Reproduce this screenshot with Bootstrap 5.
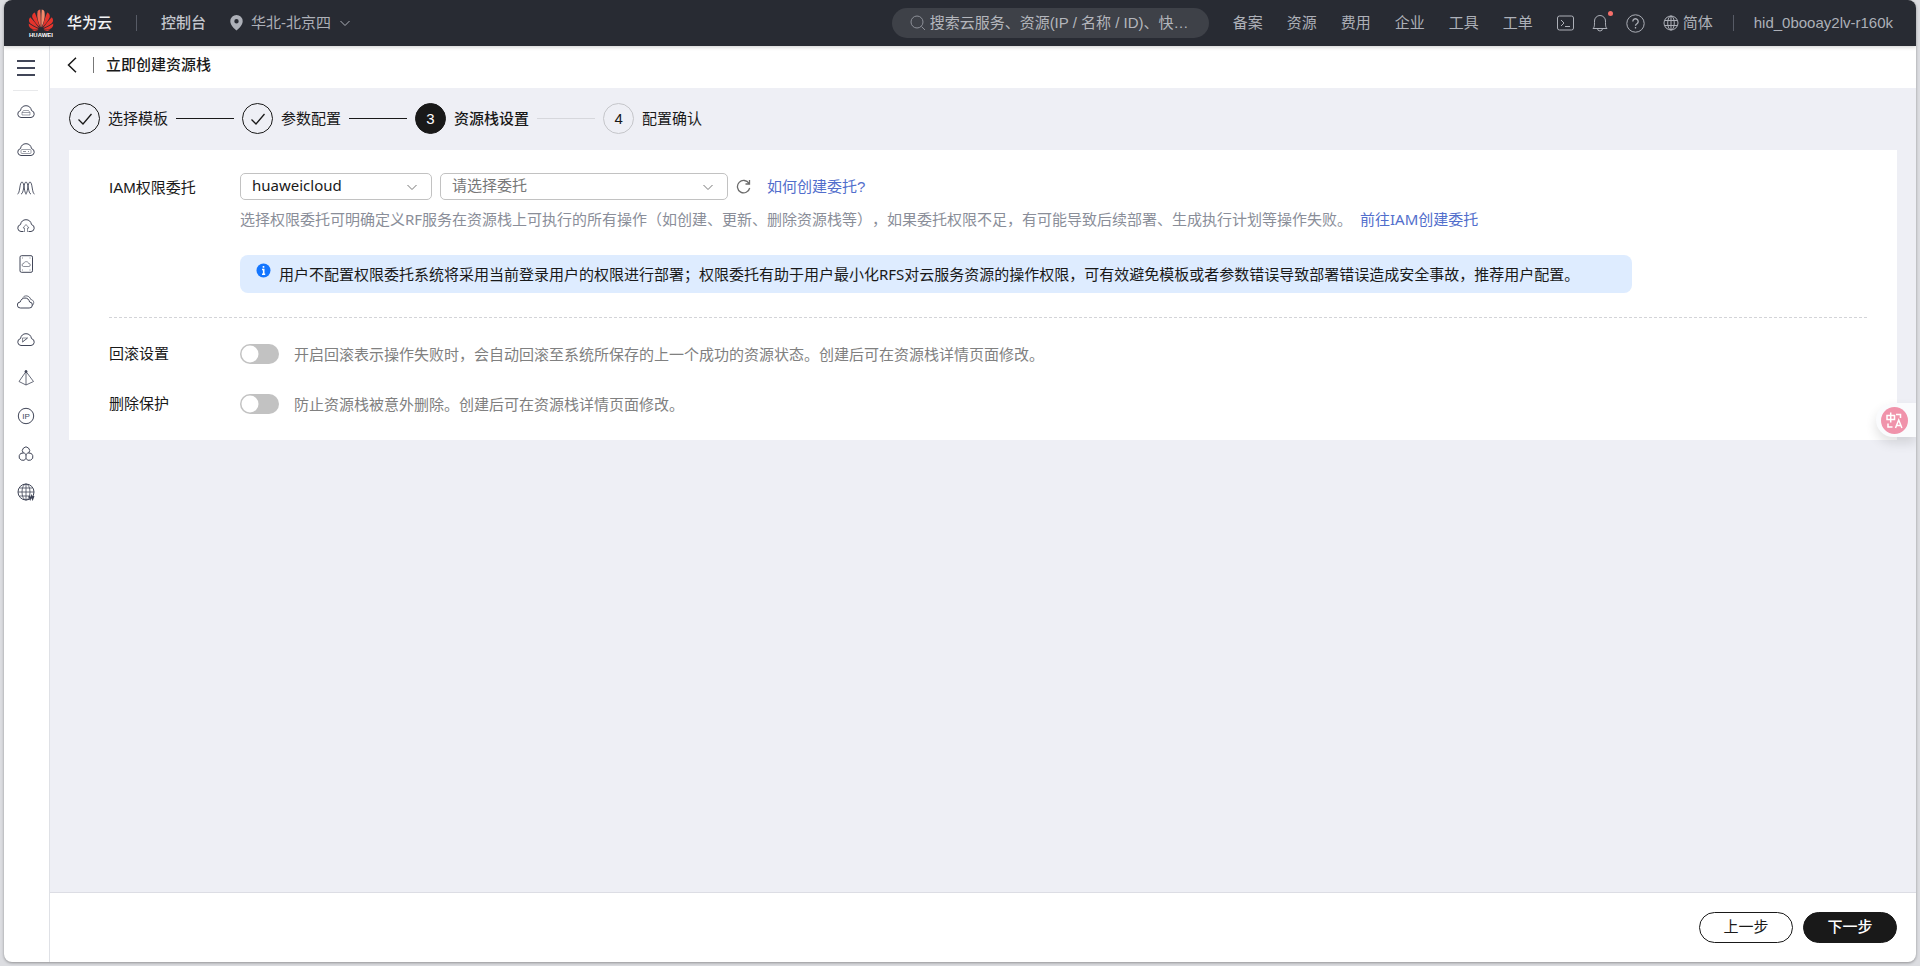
<!DOCTYPE html>
<html lang="zh-CN">
<head>
<meta charset="utf-8">
<meta name="viewport" content="width=device-width, initial-scale=1">
<title>立即创建资源栈</title>
<link href="https://cdn.jsdelivr.net/npm/bootstrap@5.3.0/dist/css/bootstrap.min.css" rel="stylesheet">
<style>
  body { font: 15px/22px "Liberation Sans", "Noto Sans CJK SC", sans-serif; color: #191919; background: #dcdde1; text-spacing-trim: space-all; }
  .app-window { min-height: 100vh; padding: 0 4px 4px; }
  .app-frame { background: #fff; border-radius: 8px; overflow: hidden; box-shadow: 0 1px 3px rgba(0,0,0,.35); }
  .topbar { height: 46px; background: #282b33; color: #adb0b8; padding: 0 23px; position: relative; z-index: 1; box-shadow: 0 1px 4px rgba(0,0,0,.2); }
  .topbar a { color: inherit; text-decoration: none; white-space: nowrap; }
  .topbar .brand-text { color: #f2f3f5; font-weight: 500; margin-left: 12px; }
  .topbar .console-link { color: #c3c6cd; font-weight: 500; }
  .v-line { width: 1px; height: 16px; background: #575b66; }
  .user-line { margin: 0 20px; }
  .search-pill { width: 317px; height: 30px; border-radius: 15px; background: #3e4148; padding: 0 14px 0 18px; color: #8d9098; }
  .search-pill input { background: none; border: 0; outline: 0; color: #b9bbc2; padding: 0; text-overflow: ellipsis; min-width: 0; }
  .search-pill input::placeholder { color: #b4b6bc; opacity: 1; }
  .menu-links { gap: 24px; }
  .tool-links { gap: 18px; }
  .plain-btn { border: 0; background: none; padding: 0; color: inherit; display: flex; position: relative; }
  .alert-dot { position: absolute; top: -3px; right: -5px; width: 5px; height: 5px; border-radius: 50%; background: #f66f6a; }
  svg { display: block; flex: none; fill: none; stroke: currentColor; }
  .filled-icon { stroke: none; }
  .white-icon { stroke: #fff; }
  .grey-icon { stroke: #6b6b6b; }
  .side-rail { width: 46px; border-right: 1px solid #dfe1e6; color: #414658; padding: 14px 2px 0 0; }
  .side-rail hr { width: 25px; margin: 14px 0 2px; color: #a5a8ae; }
  .side-rail a { color: inherit; height: 38px; display: flex; align-items: center; }
  .page-title { height: 42px; padding-left: 17px; }
  .page-title h1 { font-size: 15px; line-height: 22px; font-weight: 500; margin: 0; color: #191919; }
  .page-title .v-line { background: #777; }
  .work-area { background: #eeeff5; padding: 15px 19px; }
  .steps { margin-bottom: 16px; }
  .step-dot { width: 31px; height: 31px; border: 1px solid #191919; border-radius: 50%; }
  .step-dot.now { background: #191919; color: #fff; }
  .step-dot.later { border-color: #c5c6ca; }
  .step-now-text { font-weight: 500; }
  .step-line { width: 58px; height: 1px; background: #191919; }
  .step-line.later { background: #d6d7dc; }
  .panel-box { background: #fff; padding: 23px 30px 25px 40px; }
  .field-label { width: 131px; flex: none; }
  .form-select { font: 15px/21px "Noto Sans", "Noto Sans CJK SC", sans-serif; height: 27px; border: 1px solid #c2c2c2; border-radius: 5px; padding: 0 32px 2px 11px; color: #191919;
    background-image: url("data:image/svg+xml,%3Csvg xmlns='http://www.w3.org/2000/svg' viewBox='0 0 12 12' fill='none' stroke='%23777'%3E%3Cpath d='M1.5 4L6 8.5 10.5 4'/%3E%3C/svg%3E"); background-size: 12px; background-position: right 13px center; }
  .form-select.domain { width: 192px; }
  .form-select.agency { width: 288px; color: #777; }
  .text-link { color: #526ecc; text-decoration: none; }
  .hint { color: #8a8e99; font-family: "Noto Sans", "Noto Sans CJK SC", sans-serif; }
  .hint.soft { color: #808080; }
  .note { background: #deecff; border-radius: 8px; max-width: 1392px; padding: 8px 16px; margin-top: 25px; font-family: "Noto Sans", "Noto Sans CJK SC", sans-serif; }
  .dash { border: 0; border-top: 1px dashed #c9cacf; margin: 24px 0 25px; opacity: .8; }
  .form-switch { padding: 0; margin: 0; min-height: 0; width: 54px; flex: none; }
  .form-switch .form-check-input { float: none; display: block; margin: 0; width: 39px; height: 20px; border: 0; background-color: #c2c2c2;
    background-image: url("data:image/svg+xml,%3Csvg xmlns='http://www.w3.org/2000/svg' viewBox='0 0 20 20'%3E%3Ccircle cx='10' cy='10' r='8.5' fill='%23fff'/%3E%3C/svg%3E"); }
  .switch-row + .switch-row { margin-top: 28px; }
  .action-bar { padding: 19px; gap: 10px; border-top: 1px solid #dcdde4; }
  .btn-pill { width: 94px; height: 31px; border-radius: 16px; border: 1px solid #191919; padding: 0 0 2px; font-size: 15px; line-height: 22px; color: #191919; background: #fff; }
  .btn-pill.solid { background: #191919; color: #fff; font-weight: 500; }
  .translate-tab { position: fixed; right: 4px; top: 403px; width: 40px; height: 34px; border: 0; border-radius: 17px 0 0 17px; background: #fafbfd; padding: 0 0 0 5px; box-shadow: 0 6px 12px rgba(0,0,0,.12); clip-path: inset(-20px 0 -24px -20px); }
</style>
</head>
<body>
<div class="app-window d-flex">
<div class="app-frame d-flex flex-column flex-fill">
  <header class="topbar d-flex align-items-center">
    <a href="#" class="d-flex align-items-center">
      <svg class="filled-icon" width="28" height="28" viewBox="0 0 28 28">
        <g fill="#e5342c">
          <path d="M13.6 18.6C11 12.5 9.6 8 10.6 2.6 10.9 1.1 12.6.3 13.3.4 13.7 6 13.9 12 13.6 18.6z" fill="#f0644e"/>
          <path d="M14.5 18.6C17 12.5 18.5 8 17.4 2.6 17.1 1.1 15.4.3 14.7.4 14.3 6 14.2 12 14.5 18.6z" fill="#f58a6c"/>
          <path d="M12.8 18.6C11.3 12.8 9.3 7 7.8 3.4 4.8 4.8 4.6 7.6 6 9.8 7.9 13.2 10.2 16 12.8 18.6z"/>
          <path d="M15.2 18.6C16.7 12.8 18.7 7 20.2 3.4 23.2 4.8 23.4 7.6 22 9.8 20.1 13.2 17.8 16 15.2 18.6z"/>
          <path d="M12 19C8.900 14.800 6 11 3.200 8.200 1 11 2 13.700 4.200 15.100 6.700 16.800 9 18.100 12 19z"/>
          <path d="M16 19C19.100 14.800 22 11 24.800 8.200 27 11 26 13.700 23.800 15.100 21.300 16.800 19 18.100 16 19z"/>
          <path d="M11.500 20C7.500 18 4.500 16.200 1.700 14.500 1.500 17.700 3.300 19.700 5.600 20 7.700 20.300 9.500 20.200 11.500 20zM16.500 20C20.500 18 23.500 16.200 26.300 14.500 26.500 17.700 24.700 19.700 22.400 20 20.300 20.300 18.500 20.200 16.500 20z"/>
          <path d="M11.600 20.600H5C6.500 22.500 8.500 22.600 11.600 20.600zM16.400 20.600H23C21.500 22.500 19.500 22.600 16.400 20.600z"/>
        </g>
        <text x="14" y="28" text-anchor="middle" font-size="6" font-weight="700" fill="#fff" font-family="Liberation Sans, sans-serif">HUAWEI</text>
      </svg>
      <span class="brand-text">华为云</span>
    </a>
    <span class="v-line mx-4"></span>
    <a href="#" class="console-link">控制台</a>
    <a href="#" class="d-flex align-items-center ms-4">
      <svg class="filled-icon me-2" width="13" height="16" viewBox="0 0 13 16"><path fill="currentColor" fill-rule="evenodd" d="M6.500 0A6.200 6.200 0 0 1 12.700 6.200C12.700 9.500 9.500 13 6.500 15.500 3.500 13 .3 9.500.3 6.200A6.200 6.200 0 0 1 6.500 0zm0 4a2.200 2.200 0 1 0 0 4.400 2.200 2.200 0 0 0 0-4.400z"/></svg>
      华北-北京四
      <svg class="ms-2" width="12" height="12" viewBox="0 0 12 12"><path d="M1.500 4L6 8.500 10.500 4"/></svg>
    </a>
    <div class="search-pill d-flex align-items-center ms-auto">
      <svg width="16" height="16" viewBox="0 0 16 16"><circle cx="7" cy="7" r="6"/><path d="M11.500 11.500L15 15"/></svg>
      <input class="flex-fill ms-1" type="text" aria-label="搜索" placeholder="搜索云服务、资源(IP / 名称 / ID)、快速入口">
    </div>
    <nav class="menu-links d-flex ms-4">
      <a href="#">备案</a><a href="#">资源</a><a href="#">费用</a><a href="#">企业</a><a href="#">工具</a><a href="#">工单</a>
    </nav>
    <div class="tool-links d-flex align-items-center ms-4">
      <button class="plain-btn" aria-label="终端"><svg width="17" height="16" viewBox="0 0 17 16"><rect x=".5" y="1" width="16" height="14" rx="2"/><path d="M4 5l3 3-3 3M8 11.500h5"/></svg></button>
      <button class="plain-btn" aria-label="消息"><svg width="16" height="18" viewBox="0 0 16 18"><path d="M1 14.500C2.500 13 2.500 12 2.500 7a5.500 5.500 0 0 1 11 0c0 5 0 6 1.500 7.500zM5.500 14.500a2.500 2.500 0 0 0 5 0"/></svg><span class="alert-dot"></span></button>
      <button class="plain-btn" aria-label="帮助"><svg width="19" height="19" viewBox="0 0 19 19"><circle cx="9.500" cy="9.500" r="8.700"/><path d="M6.800 7.500a2.700 2.700 0 1 1 4.200 2.200c-1 .7-1.500 1-1.500 2.100M9.500 13v1.500" stroke-width="1.300"/></svg></button>
      <a href="#" class="d-flex align-items-center"><svg class="me-1" width="16" height="16" viewBox="0 0 16 16"><circle cx="8" cy="8" r="7"/><ellipse cx="8" cy="8" rx="3.300" ry="7"/><path d="M8 1v14M1.500 5.500h13M1.500 10.500h13"/></svg>简体</a>
    </div>
    <span class="v-line user-line"></span>
    <a href="#">hid_0booay2lv-r160k</a>
  </header>

  <div class="d-flex flex-fill">
    <nav class="side-rail d-flex flex-column align-items-center">
      <button class="plain-btn" aria-label="菜单"><svg width="18" height="16" viewBox="0 0 18 16" stroke-width="2"><path d="M0 1h18M0 8h18M0 15h18"/></svg></button>
      <hr>
      <a href="#" aria-label="弹性云服务器"><svg width="18" height="18" viewBox="0 0 18 18"><path d="M4 14.500a3.500 3.500 0 0 1-.5-6.900C4 4.500 6 2.700 9 2.700s5 1.800 5.500 4.900a3.500 3.500 0 0 1-.5 6.900z"/><path stroke-width=".5" d="M5 9.500h8M5 9.500l1.500-2h5l1.500 2V12H5z"/></svg></a>
      <a href="#" aria-label="裸金属服务器"><svg width="18" height="18" viewBox="0 0 18 18"><path d="M4 14.500a3.500 3.500 0 0 1-.5-6.900C4 4.500 6 2.700 9 2.700s5 1.800 5.500 4.900a3.500 3.500 0 0 1-.5 6.900z"/><rect stroke-width=".5" x="4" y="8.500" width="10" height="4" rx="1"/><path stroke-width=".6" d="M6 10.500h3M11.500 10v1"/></svg></a>
      <a href="#" aria-label="弹性伸缩"><svg width="18" height="18" viewBox="0 0 18 18" stroke-width=".9"><path d="M.5 15C3 15 2.500 3 5 3s2 12 4.500 12M4 15C7 15 6.500 3 9 3s2 12 5 12M8.500 15C11 15 10.500 3 13 3s2 12 4.500 12"/></svg></a>
      <a href="#" aria-label="云备份"><svg width="18" height="18" viewBox="0 0 18 18"><path d="M6.500 14.500H4a3.500 3.500 0 0 1-.5-6.900C4 4.500 6 2.700 9 2.700s5 1.800 5.500 4.900a3.500 3.500 0 0 1-.5 6.900h-2.500"/><path stroke-width=".6" d="M7.500 15V11H6l3-3.500 3 3.500h-1.500v4"/></svg></a>
      <a href="#" aria-label="云硬盘"><svg width="18" height="18" viewBox="0 0 18 18"><rect x="3" y=".7" width="12.500" height="16.600" rx="1.500"/><path stroke-width=".6" d="M6.500 11.500a1.500 1.500 0 0 1 .2-3c.5-2.500 4.500-2.500 5 0a1.500 1.500 0 0 1 .2 3zM5 3h1M12.500 3h1M5 15h1M12.500 15h1"/></svg></a>
      <a href="#" aria-label="虚拟私有云"><svg width="18" height="18" viewBox="0 0 18 18"><path d="M3.500 15a3 3 0 0 1-.3-6C4 6.500 5.500 5 8 5s4 1.500 4.600 4a3 3 0 0 1-.4 6z"/><path stroke-width=".8" d="M6 4.500C7.500 2 12.500 2.200 13.800 6.500c2.500.2 4.500 3.500 1.200 6.200"/></svg></a>
      <a href="#" aria-label="内容分发"><svg width="18" height="18" viewBox="0 0 18 18"><path d="M4 14.500a3.500 3.500 0 0 1-.5-6.900C4 4.500 6 2.700 9 2.700s5 1.800 5.500 4.900a3.500 3.500 0 0 1-.5 6.900z"/><path stroke-width=".6" d="M5.500 11V7h5zM5.500 11l5-4"/></svg></a>
      <a href="#" aria-label="云解析"><svg width="18" height="18" viewBox="0 0 18 18"><path stroke-width=".8" d="M9 2.500L2 12.500l7 3.500 7.500-3.500zM9 2.500V16"/><circle cx="9" cy="2.500" r="1" fill="currentColor"/></svg></a>
      <a href="#" aria-label="弹性公网IP"><svg width="18" height="18" viewBox="0 0 18 18"><circle cx="9" cy="9" r="7.700"/><text x="9" y="12" text-anchor="middle" font-size="8" stroke="none" fill="currentColor">IP</text></svg></a>
      <a href="#" aria-label="对象存储"><svg width="18" height="18" viewBox="0 0 18 18"><path d="M6.300 8a3.600 3.600 0 1 1 5.400 0M6.300 8a3.700 3.700 0 1 0 2.700 5.500A3.700 3.700 0 1 0 11.700 8M6.300 8C8 8 9 9 9 10.500 9 9 10 8 11.700 8M9 10.500v3"/></svg></a>
      <a href="#" aria-label="域名注册"><svg width="18" height="18" viewBox="0 0 18 18"><circle cx="9" cy="9" r="8"/><ellipse cx="9" cy="9" rx="4" ry="8" stroke-width=".8"/><path stroke-width=".8" d="M9 1v16M1 9h16M2.500 5h13M2.500 13h10"/><path stroke-width="1.500" d="M12 13l1.200 3 1.200-3 1.200 3 1.200-3"/></svg></a>
    </nav>

    <div class="d-flex flex-column flex-fill">
      <div class="page-title d-flex align-items-center">
        <a href="#" class="text-reset pb-2" aria-label="返回"><svg class="mt-1" width="10" height="16" viewBox="0 0 10 16" stroke-width="1.500"><path d="M9 .8L1.500 8 9 15.200"/></svg></a>
        <span class="v-line ms-3 me-2 mb-1"></span>
        <h1 class="ms-1 pb-1">立即创建资源栈</h1>
      </div>
      <main class="work-area flex-fill">
        <div class="steps d-flex align-items-center gap-2">
          <span class="step-dot d-flex align-items-center justify-content-center"><svg width="16" height="16" viewBox="0 0 16 16" stroke-width="1.300"><path d="M1.500 8.500L6 13l8.500-10"/></svg></span>
          <span>选择模板</span><span class="step-line"></span>
          <span class="step-dot d-flex align-items-center justify-content-center"><svg width="16" height="16" viewBox="0 0 16 16" stroke-width="1.300"><path d="M1.500 8.500L6 13l8.500-10"/></svg></span>
          <span>参数配置</span><span class="step-line"></span>
          <span class="step-dot now d-flex align-items-center justify-content-center">3</span>
          <span class="step-now-text">资源栈设置</span><span class="step-line later"></span>
          <span class="step-dot later d-flex align-items-center justify-content-center">4</span>
          <span>配置确认</span>
        </div>
        <form class="panel-box">
          <div class="d-flex">
            <label class="field-label pt-1" for="domain">IAM权限委托</label>
            <div class="flex-fill">
              <div class="d-flex align-items-center gap-2">
                <select class="form-select domain" id="domain"><option>huaweicloud</option></select>
                <select class="form-select agency" aria-label="委托"><option>请选择委托</option></select>
                <button type="button" class="plain-btn" aria-label="刷新"><svg class="grey-icon" width="15" height="15" viewBox="0 0 15 15" stroke-width="1.300"><path d="M13 4.500A6.200 6.200 0 1 0 13.700 9M13.500 1v4H9.500"/></svg></button>
                <a href="#" class="text-link ms-2">如何创建委托?</a>
              </div>
              <div class="hint mt-2">选择权限委托可明确定义RF服务在资源栈上可执行的所有操作（如创建、更新、删除资源栈等），如果委托权限不足，有可能导致后续部署、生成执行计划等操作失败。 <a href="#" class="text-link ms-1">前往IAM创建委托</a></div>
              <div class="note d-flex">
                <svg class="filled-icon me-2" width="15" height="15" viewBox="0 0 15 15"><circle cx="7.500" cy="7.500" r="7" fill="#1476ff"/><path stroke="#fff" stroke-width="1.600" d="M7.500 3v1.800M6 6.500h1.700v5M6 11.300h3.200"/></svg>
                <span>用户不配置权限委托系统将采用当前登录用户的权限进行部署；权限委托有助于用户最小化RFS对云服务资源的操作权限，可有效避免模板或者参数错误导致部署错误造成安全事故，推荐用户配置。</span>
              </div>
            </div>
          </div>
          <hr class="dash">
          <div class="switch-row d-flex align-items-center">
            <label class="field-label" for="rollback">回滚设置</label>
            <div class="form-check form-switch"><input class="form-check-input" type="checkbox" role="switch" id="rollback"></div>
            <span class="hint soft">开启回滚表示操作失败时，会自动回滚至系统所保存的上一个成功的资源状态。创建后可在资源栈详情页面修改。</span>
          </div>
          <div class="switch-row d-flex align-items-center">
            <label class="field-label" for="protect">删除保护</label>
            <div class="form-check form-switch"><input class="form-check-input" type="checkbox" role="switch" id="protect"></div>
            <span class="hint soft">防止资源栈被意外删除。创建后可在资源栈详情页面修改。</span>
          </div>
        </form>
      </main>
      <footer class="action-bar d-flex justify-content-end">
        <button class="btn btn-pill">上一步</button>
        <button class="btn btn-pill solid">下一步</button>
      </footer>
    </div>
  </div>
</div>
</div>
<button class="translate-tab" aria-label="翻译">
  <svg class="white-icon" width="27" height="27" viewBox="0 0 27 27" stroke-width="1.500"><circle cx="13.500" cy="13.500" r="13.500" fill="#f093ab" stroke="none"/><path d="M6 8.500h7.500v4H6zM9.700 5.500v10M15 7.500h4.500v3.500M7 16.500v3.500h4.500M14.500 21l3.200-8 3.200 8M15.600 18.500h4.200"/></svg>
</button>
<script src="https://cdn.jsdelivr.net/npm/bootstrap@5.3.0/dist/js/bootstrap.bundle.min.js"></script>
</body>
</html>
